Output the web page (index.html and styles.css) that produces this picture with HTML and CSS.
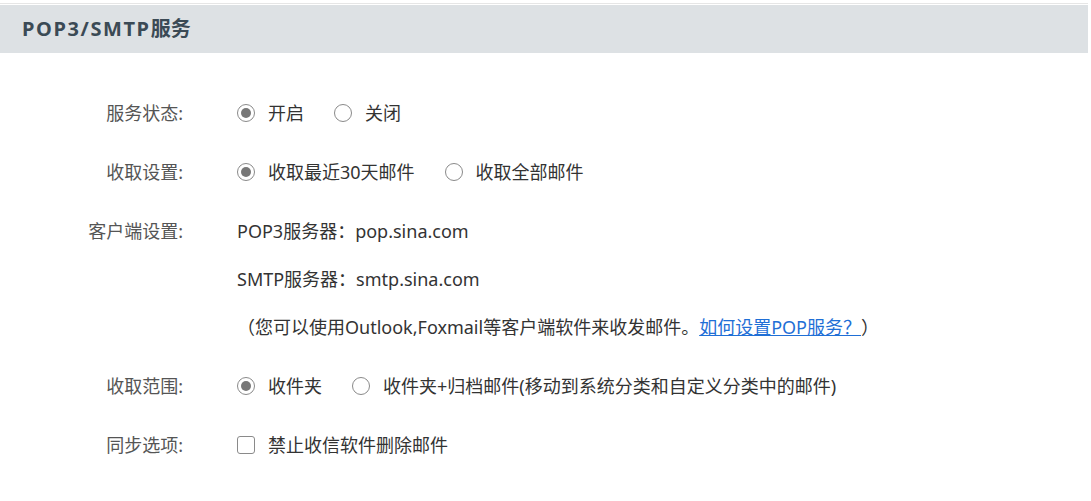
FILE: index.html
```html
<!DOCTYPE html>
<html lang="zh-CN">
<head>
<meta charset="utf-8">
<title>POP3/SMTP服务</title>
<link rel="stylesheet" href="styles.css">
</head>
<body>
<div class="page">
  <div class="head"><h2 class="title"><span class="title-en">POP3/SMTP</span>服务</h2></div>
  <div class="form">
    <div class="group">
      <div class="label">服务状态:</div>
      <div class="field">
        <div class="row">
          <label class="opt"><span class="radio on"></span><span>开启</span></label>
          <label class="opt"><span class="radio"></span><span>关闭</span></label>
        </div>
      </div>
    </div>
    <div class="group">
      <div class="label">收取设置:</div>
      <div class="field">
        <div class="row">
          <label class="opt"><span class="radio on"></span><span>收取最近30天邮件</span></label>
          <label class="opt"><span class="radio"></span><span>收取全部邮件</span></label>
        </div>
      </div>
    </div>
    <div class="group">
      <div class="label">客户端设置:</div>
      <div class="field">
        <div class="row">POP3服务器：pop.sina.com</div>
        <div class="row">SMTP服务器：smtp.sina.com</div>
        <div class="row note">（您可以使用Outlook,Foxmail等客户端软件来收发邮件。<a class="link" href="#">如何设置POP服务？</a>）</div>
      </div>
    </div>
    <div class="group">
      <div class="label">收取范围:</div>
      <div class="field">
        <div class="row">
          <label class="opt"><span class="radio on"></span><span>收件夹</span></label>
          <label class="opt"><span class="radio"></span><span>收件夹+归档邮件(移动到系统分类和自定义分类中的邮件)</span></label>
        </div>
      </div>
    </div>
    <div class="group">
      <div class="label">同步选项:</div>
      <div class="field">
        <div class="row">
          <label class="opt"><span class="check"></span><span>禁止收信软件删除邮件</span></label>
        </div>
      </div>
    </div>
  </div>
</div>
</body>
</html>
```

FILE: styles.css
```css
* { box-sizing: border-box; }
html, body { margin: 0; padding: 0; background: #fff; }
body {
  font-family: "Noto Sans", "Noto Sans CJK SC", sans-serif;
  font-size: 18px;
  color: #333;
}
.page { width: 1088px; padding-top: 3px; }
.head {
  border-top: 1px solid #e6e6e6;
  padding-top: 1px;
  background: #fff;
}
.title {
  margin: 0;
  height: 48px;
  line-height: 48px;
  padding-left: 22px;
  background: #dde1e4;
  color: #3b4a55;
  font-size: 20px;
  font-weight: bold;
}
.title-en { letter-spacing: 1.6px; }
.form { padding-top: 36px; }
.group { display: flex; margin-bottom: 11px; }
.label {
  width: 183px;
  text-align: right;
  color: #555;
  line-height: 48px;
  height: 48px;
  flex: none;
}
.field { padding-left: 54px; }
.row {
  height: 48px;
  line-height: 48px;
  display: flex;
  align-items: center;
  white-space: nowrap;
}
.opt { display: flex; align-items: center; margin-right: 30px; }
.radio {
  width: 18px; height: 18px;
  border: 1px solid #8a8a8a;
  border-radius: 50%;
  margin-right: 13px;
  position: relative;
  flex: none;
}
.radio.on::after {
  content: "";
  position: absolute;
  left: 3px; top: 3px;
  width: 10px; height: 10px;
  border-radius: 50%;
  background: #777;
}
.check {
  width: 18px; height: 18px;
  border: 1px solid #8a8a8a;
  border-radius: 3px;
  margin-right: 13px;
  flex: none;
}
.link { color: #1f6fd6; text-decoration: underline; }
```
